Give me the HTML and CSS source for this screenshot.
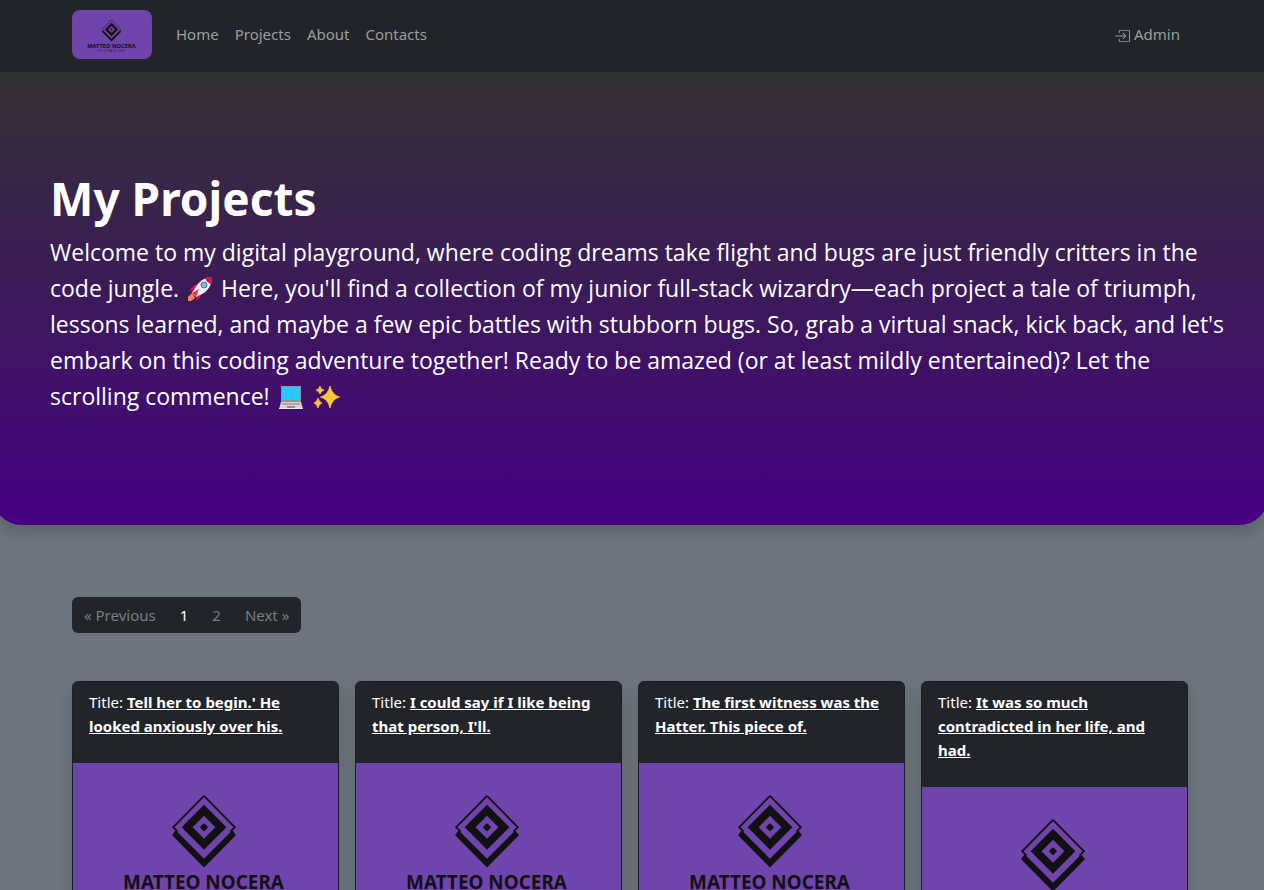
FILE: index.html
```html
<!DOCTYPE html>
<html lang="en">
<head>
<meta charset="utf-8">
<meta name="viewport" content="width=device-width, initial-scale=1">
<title>My Projects</title>
<link rel="stylesheet" href="styles.css">
</head>
<body>
<svg class="defs" aria-hidden="true">
  <symbol id="logo" viewBox="0 0 266 163">
    <rect width="266" height="163" fill="#7044ad"/>
    <path d="M131.500 33 162.500 64.500 158 69 M131.500 33 100.500 64.500 105 69" fill="none" stroke="#111" stroke-width="1.800"/>
    <path d="M103 67.500 131.500 96 160 67.500 163.500 72.500 131.500 105 99.500 72.500Z" fill="#111"/>
    <path fill-rule="evenodd" d="M131.500 42 154 64.500 131.500 87 109 64.500Z M131.500 53 120 64.500 131.500 76 143 64.500Z" fill="#111"/>
    <rect x="128.500" y="61.500" width="6" height="6" rx="1" transform="rotate(45 131.500 64.500)" fill="#111"/>
    <text x="131" y="126" class="logo-name">MATTEO NOCERA</text>
    <text x="131" y="141" class="logo-sub">FULLSTACK DEV</text>
  </symbol>
</svg>

<header class="navbar">
  <nav class="container navbar-inner" aria-label="Main">
    <a class="brand" href="#" aria-label="Matteo Nocera"><svg class="brand-logo" aria-hidden="true"><use href="#logo"/></svg></a>
    <a class="nav-link" href="#">Home</a>
    <a class="nav-link" href="#">Projects</a>
    <a class="nav-link" href="#">About</a>
    <a class="nav-link" href="#">Contacts</a>
    <a class="nav-link admin" href="#"><svg class="admin-icon" viewBox="0 0 16 16" fill="currentColor" aria-hidden="true"><path fill-rule="evenodd" d="M4.500 11.500A.5.5 0 0 1 5 12v1.500a.5.5 0 0 0 .5.5h9a.5.5 0 0 0 .5-.5v-10a.5.5 0 0 0-.5-.5h-9a.5.5 0 0 0-.5.5V5a.5.5 0 0 1-1 0V3.500A1.500 1.500 0 0 1 5.500 2h9A1.500 1.500 0 0 1 16 3.500v10a1.500 1.500 0 0 1-1.500 1.500h-9A1.500 1.500 0 0 1 4 13.500V12a.5.5 0 0 1 .5-.5z"/><path fill-rule="evenodd" d="M11.854 8.854a.5.5 0 0 0 0-.708l-3-3a.5.5 0 1 0-.708.708L10.293 8H.5a.5.5 0 0 0 0 1h9.793l-2.147 2.146a.5.5 0 0 0 .708.708l3-3z"/></svg>Admin</a>
  </nav>
</header>

<main>
  <section class="hero">
    <h1 class="hero-title">My Projects</h1>
    <p class="hero-text">Welcome to my digital playground, where coding dreams take flight and bugs are just friendly critters in the code jungle.
      <svg class="emoji" viewBox="0 0 26 26" role="img" aria-label="rocket"><path d="M4 14 9 9h6v8l-3 7-2-5-4-3-5-2Z" fill="#b90d45"/><path d="M3 13 9 8l6 8-2 5-4 4 1-7-4-3Z" fill="#cb1349"/><path d="M25 1c-6 0-11 3-15 8L5 17l4 4 8-4c5-4 8-9 8-16Z" fill="#f4f1f4"/><path d="M25 1c-3 0-5 0-7 1 1 3 3 5 6 6 1-2 1-4 1-7Z" fill="#d3134c"/><path d="m5 17 7-4-3 8Z" fill="#f92f60"/><path d="m5 17-4 4v4h3l4-3Z" fill="#ff8257"/><circle cx="17" cy="9" r="3" fill="#77bce8" stroke="#667080" stroke-width="1"/></svg>
      Here, you'll find a collection of my junior full-stack wizardry—each project a tale of triumph, lessons learned, and maybe a few epic battles with stubborn bugs. So, grab a virtual snack, kick back, and let's embark on this coding adventure together! Ready to be amazed (or at least mildly entertained)? Let the scrolling commence!
      <svg class="emoji" viewBox="0 0 26 26" role="img" aria-label="laptop"><path d="M3 2h20v16H3Z" fill="#929292"/><path d="M4 3h18v13H4Z" fill="#26c9fc"/><path d="M3 18h20l2 7H1Z" fill="#d3d3d3"/><path d="M4 19h18v2H4Z" fill="#a8a8a8"/><path d="M9 22h8v2H9Z" fill="#8d8d8d"/><path d="M1 24h24v1H1Z" fill="#eee"/></svg>
      <svg class="emoji" viewBox="0 0 26 26" role="img" aria-label="sparkles"><path d="M16 2q2 9 9.500 11-7.500 2-9.500 11-2-9-9.500-11 7.500-2 9.500-11ZM6 2q1 4 4 4-3 1-4 4-1-3-4-4 3 0 4-4ZM4 14q1 4 4 5-3 1-4 5-1-4-4-5 3-1 4-5Z" fill="#fcc43b" stroke="#fcc43b" stroke-width=".8" stroke-linejoin="round"/></svg>
    </p>
  </section>

  <div class="container content">
    <nav class="pagination" aria-label="Pages">
      <a class="page-link" href="#">« Previous</a>
      <a class="page-link active" href="#" aria-current="page">1</a>
      <a class="page-link" href="#">2</a>
      <a class="page-link" href="#">Next »</a>
    </nav>

    <div class="cards">
      <article class="card">
        <div class="card-header">Title: <a href="#">Tell her to begin.' He looked anxiously over his.</a></div>
        <svg class="card-image" viewBox="0 0 266 163" role="img" aria-label="Matteo Nocera"><use href="#logo"/></svg>
      </article>
      <article class="card">
        <div class="card-header">Title: <a href="#">I could say if I like being that person, I'll.</a></div>
        <svg class="card-image" viewBox="0 0 266 163" role="img" aria-label="Matteo Nocera"><use href="#logo"/></svg>
      </article>
      <article class="card">
        <div class="card-header">Title: <a href="#">The first witness was the Hatter. This piece of.</a></div>
        <svg class="card-image" viewBox="0 0 266 163" role="img" aria-label="Matteo Nocera"><use href="#logo"/></svg>
      </article>
      <article class="card">
        <div class="card-header">Title: <a href="#">It was so much contradicted in her life, and had.</a></div>
        <svg class="card-image" viewBox="0 0 266 163" role="img" aria-label="Matteo Nocera"><use href="#logo"/></svg>
      </article>
    </div>
  </div>
</main>
</body>
</html>
```
FILE: styles.css
```css
* { box-sizing: border-box; }

body {
  margin: 0;
  background: #6c757d;
  color: #fff;
  font: 15px/24px "Segoe UI", "Noto Sans", "Open Sans", sans-serif;
  overflow-x: hidden;
}

a { color: inherit; }

.defs { position: absolute; width: 0; height: 0; }

.navbar {
  padding-right: 4px;
  background: #212529;
  color: #9b9d9e;
}

.container {
  width: 100%;
  max-width: 1140px;
  margin: 0 auto;
  padding: 0 12px;
}

.navbar-inner {
  display: flex;
  align-items: center;
  padding-top: 10px;
  padding-bottom: 13px;
}

.brand { display: flex; margin-right: 16px; }

.brand-logo {
  width: 80px;
  height: 49px;
  border-radius: 8px;
}

.logo-name {
  font: 700 19px "Noto Sans", sans-serif;
  fill: #111;
  text-anchor: middle;
}

.logo-sub {
  font: 9px "Noto Sans", sans-serif;
  letter-spacing: 2px;
  fill: #1c1524;
  text-anchor: middle;
}

.nav-link { padding: 0 8px 2px; text-decoration: none; }

.admin {
  display: flex;
  align-items: center;
  gap: 4px;
  margin-left: auto;
}

.admin-icon { width: 15px; height: 15px; margin-top: 3px; }

main { padding-right: 4px; }

.hero {
  margin: 0 -9px 0 -8px;
  padding: 96px 44px 111px 58px;
  background: linear-gradient(#333, #450082);
  border-radius: 0 0 30px 30px;
  box-shadow: 0 8px 16px rgba(0, 0, 0, 0.15);
}

.hero-title {
  margin: 0;
  font-size: 46px;
  line-height: 60px;
  font-weight: 700;
}

.hero-text {
  margin: 6px 0 0;
  font-family: "Segoe UI", "Open Sans", "Noto Sans", sans-serif;
  font-size: 23px;
  line-height: 36px;
}

.emoji {
  width: 26px;
  height: 26px;
  margin: 0 2px;
  vertical-align: -5px;
}

.content { padding-top: 72px; padding-bottom: 48px; }

.pagination {
  display: flex;
  width: fit-content;
  padding: 6px 0;
  background: #212529;
  border-radius: 6px;
  color: #7c7d7e;
}

.page-link { padding: 0 12px; text-decoration: none; }
.page-link.active { color: #fff; }

.cards {
  display: grid;
  grid-template-columns: repeat(4, 1fr);
  align-items: start;
  gap: 16px;
  margin-top: 48px;
}

.card {
  overflow: hidden;
  background: #212529;
  border: 1px solid #1c1f23;
  border-radius: 6px;
  box-shadow: 0 8px 16px rgba(0, 0, 0, 0.15);
}

.card-header {
  padding: 8px 16px 16px;
  border-bottom: 1px solid #1c1f23;
}

.card-header a { font-weight: 700; }

.card-image {
  display: block;
  width: 100%;
  margin: 8px 0;
}
```
